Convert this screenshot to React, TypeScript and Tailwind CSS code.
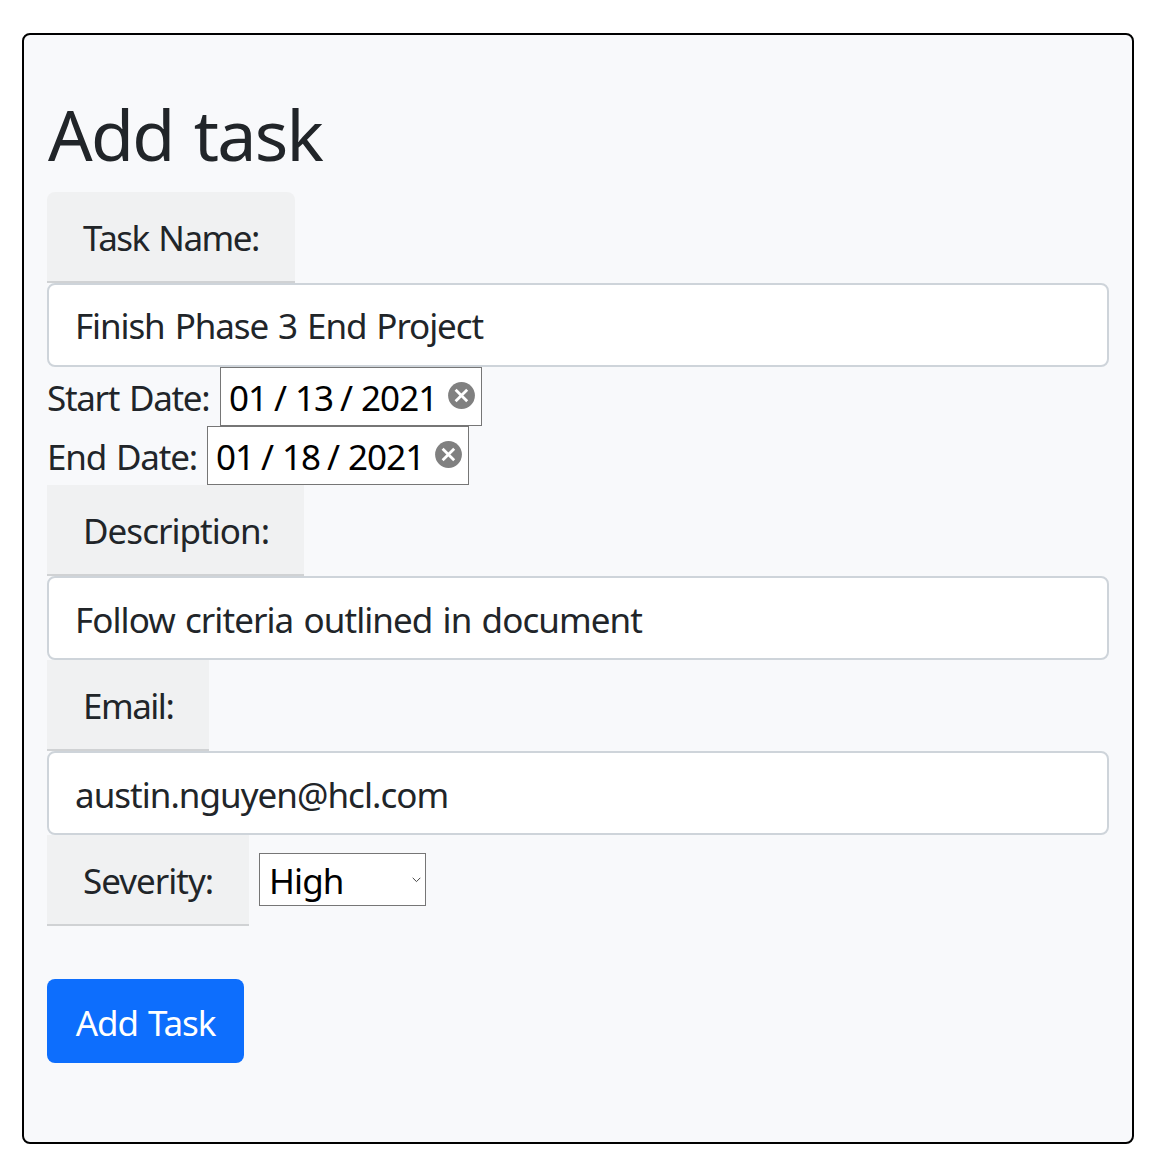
import React from "react";

type FieldProps = { label: string; labelClass: string; value?: string; valueClass?: string };

function FieldLabel({ label, labelClass }: FieldProps) {
  return (
    <label
      className={`flex h-[91px] items-center border-b-2 border-[#d0d2d4] bg-[#f0f1f2] pt-[2px] pl-[36px] whitespace-nowrap ${labelClass}`}
    >
      {label}
    </label>
  );
}

function TextField(props: FieldProps) {
  return (
    <div>
      <FieldLabel {...props} />
      <input
        type="text"
        defaultValue={props.value}
        className={`block h-[84px] w-full rounded-lg border-2 border-[#ced4da] bg-white pl-[26px] outline-none ${props.valueClass}`}
      />
    </div>
  );
}

function ClearIcon() {
  return (
    <svg width="27" height="27" viewBox="0 0 27 27" className="mb-[3px] shrink-0">
      <circle cx="13.5" cy="13.5" r="13.4" fill="#808080" />
      <path d="M7.6 7.8 19.2 19.2M19.2 7.8 7.6 19.2" stroke="#fff" strokeWidth="2.8" fill="none" />
    </svg>
  );
}

function DateRow({ label, labelClass, day }: { label: string; labelClass: string; day: string }) {
  return (
    <div className="flex h-[59px]">
      <label className={`flex shrink-0 items-center pt-[2px] whitespace-nowrap ${labelClass}`}>{label}</label>
      <div className="flex h-[59px] w-[262px] items-center border border-[#767676] bg-white pl-[8px] text-black">
        <div className="flex w-[219px] shrink-0 pt-[2px] tracking-[-0.9px]">
          <span className="w-[45px]">01</span>
          <span className="w-[21px]">/</span>
          <span className="w-[45px]">{day}</span>
          <span className="w-[21px]">/</span>
          <span>2021</span>
        </div>
        <ClearIcon />
      </div>
    </div>
  );
}

export default function App() {
  return (
    <div className="min-h-[1171px] bg-white pt-[33px] pl-[22px] font-['Noto_Sans',sans-serif] text-[35px] leading-[54px] text-[#212529]">
      <form
        onSubmit={(e) => e.preventDefault()}
        className="h-[1111px] w-[1112px] rounded-lg border-2 border-black bg-[#f8f9fb] px-[23px] pt-[54px]"
      >
        <h1 className="h-[103px] pl-px text-[70px] leading-[90px] tracking-[-1.8px] [word-spacing:4px]">Add task</h1>
        <TextField
          label="Task Name:"
          labelClass="w-[248px] rounded-t-lg tracking-[-1.5px] [word-spacing:2px]"
          value="Finish Phase 3 End Project"
          valueClass="pt-px tracking-[-1.1px] [word-spacing:2px]"
        />
        <DateRow label="Start Date:" labelClass="w-[173px] tracking-[-1.3px] [word-spacing:2px]" day="13" />
        <DateRow label="End Date:" labelClass="w-[160px] tracking-[-1.2px] [word-spacing:2px]" day="18" />
        <TextField
          label="Description:"
          labelClass="w-[257px] tracking-[-0.97px]"
          value="Follow criteria outlined in document"
          valueClass="pt-[3px] tracking-[-0.93px] [word-spacing:2px]"
        />
        <TextField
          label="Email:"
          labelClass="w-[162px] tracking-[-1.5px]"
          value="austin.nguyen@hcl.com"
          valueClass="pt-[3px] tracking-[-0.98px]"
        />
        <div className="flex">
          <FieldLabel label="Severity:" labelClass="w-[202px] tracking-[-1px]" />
          <button
            type="button"
            className="mt-[18px] ml-[10px] flex h-[53px] w-[167px] items-center justify-between border border-[#767676] bg-white pr-[4px] pl-[9px] text-black"
          >
            <span className="pt-[3px] tracking-[-0.9px]">High</span>
            <svg width="9" height="6" viewBox="0 0 9 6">
              <path d="M.7.8 4.5 4.6 8.3.8" fill="none" stroke="#444" strokeWidth="1" />
            </svg>
          </button>
        </div>
        <button
          type="submit"
          className="mt-[53px] flex h-[84px] w-[197px] items-center justify-center rounded-lg bg-[#0d6efd] pt-[4px] tracking-[-1.1px] whitespace-nowrap text-white [word-spacing:2px]"
        >
          Add Task
        </button>
      </form>
    </div>
  );
}
